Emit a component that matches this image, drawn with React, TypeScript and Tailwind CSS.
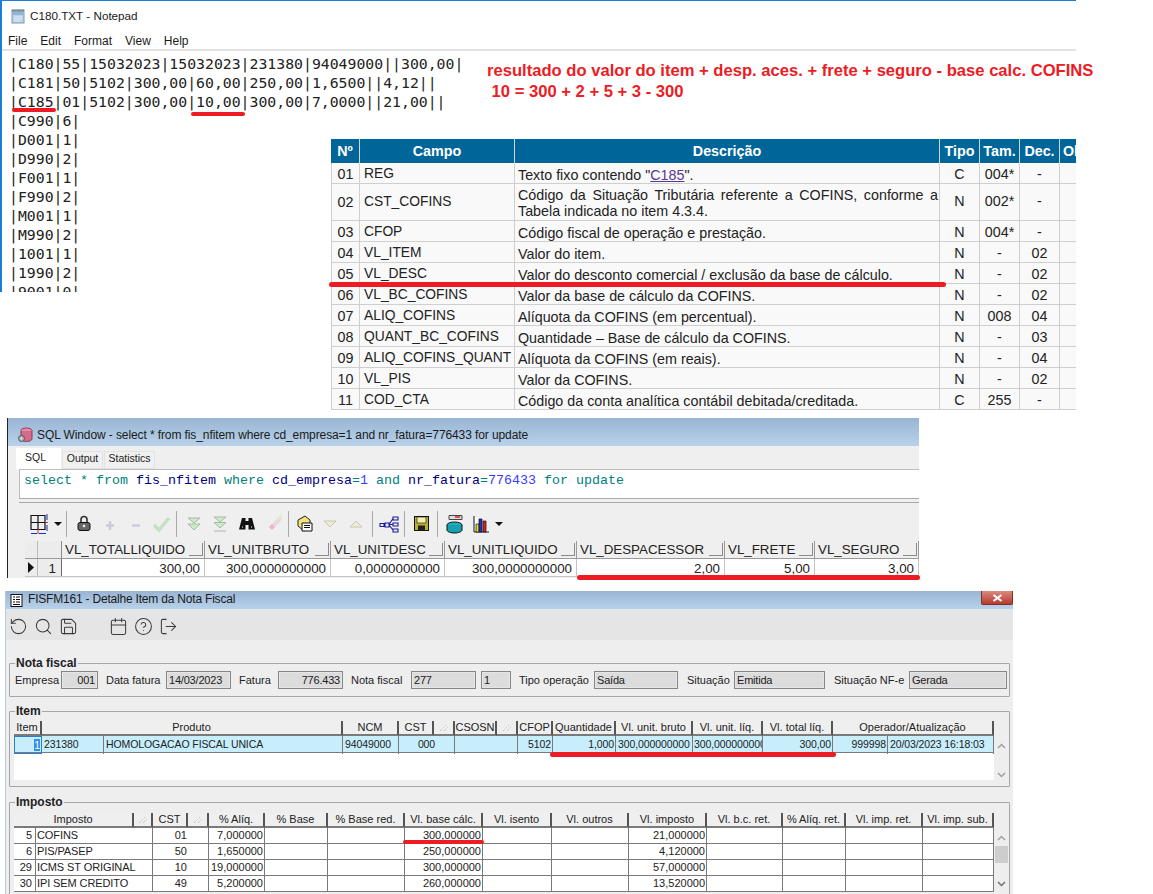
import React from 'react';
import { RotateCcw, Search, Save, Calendar, CircleHelp, LogOut } from 'lucide-react';

const sans = "font-['Liberation_Sans',Arial,sans-serif]";

const notepadLines = [
  '|C180|55|15032023|15032023|231380|94049000||300,00|',
  '|C181|50|5102|300,00|60,00|250,00|1,6500||4,12||',
  '|C185|01|5102|300,00|10,00|300,00|7,0000||21,00||',
  '|C990|6|',
  '|D001|1|',
  '|D990|2|',
  '|F001|1|',
  '|F990|2|',
  '|M001|1|',
  '|M990|2|',
  '|1001|1|',
  '|1990|2|',
  '|9001|0|',
];

const guideRows = [
  ['01', 'REG', null, 'C', '004*', '-'],
  ['02', 'CST_COFINS', 'Código da Situação Tributária referente a COFINS, conforme a Tabela indicada no item 4.3.4.', 'N', '002*', '-'],
  ['03', 'CFOP', 'Código fiscal de operação e prestação.', 'N', '004*', '-'],
  ['04', 'VL_ITEM', 'Valor do item.', 'N', '-', '02'],
  ['05', 'VL_DESC', 'Valor do desconto comercial / exclusão da base de cálculo.', 'N', '-', '02'],
  ['06', 'VL_BC_COFINS', 'Valor da base de cálculo da COFINS.', 'N', '-', '02'],
  ['07', 'ALIQ_COFINS', 'Alíquota da COFINS (em percentual).', 'N', '008', '04'],
  ['08', 'QUANT_BC_COFINS', 'Quantidade – Base de cálculo da COFINS.', 'N', '-', '03'],
  ['09', 'ALIQ_COFINS_QUANT', 'Alíquota da COFINS (em reais).', 'N', '-', '04'],
  ['10', 'VL_PIS', 'Valor da COFINS.', 'N', '-', '02'],
  ['11', 'COD_CTA', 'Código da conta analítica contábil debitada/creditada.', 'C', '255', '-'],
];

const guideCols = 'grid grid-cols-[29px_155px_425px_40px_40px_40px_16px]';

const RedLine: React.FC<{ className: string }> = ({ className }) => (
  <div className={`absolute rounded-full bg-[#ed1c24] ${className}`} />
);

const NotepadIcon = () => (
  <svg width="16" height="16" viewBox="0 0 16 16">
    <rect x="2" y="2" width="12" height="13" fill="#b9d3ea" stroke="#7d97ad" />
    <rect x="3" y="3" width="10" height="4" fill="#8fb6d8" />
    <path d="M3 1.500v2M5 1.500v2M7 1.500v2M9 1.500v2M11 1.500v2M13 1.500v2" stroke="#555" strokeWidth="0.800" />
    <path d="M4 9h8M4 11h8M4 13h6" stroke="#dfeaf4" />
  </svg>
);

const Notepad = () => (
  <div className="absolute left-0 top-0 flex h-[292px] w-[1076px] flex-col overflow-hidden border-l-2 border-t border-[#1a7fd4] bg-white">
    <div className={`flex h-[29px] shrink-0 items-center gap-[4px] pl-[8px] pt-[1px] text-[11.7px] text-[#1a1a1a] ${sans}`}>
      <NotepadIcon />
      <span>C180.TXT - Notepad</span>
    </div>
    <div className={`flex h-[21px] shrink-0 gap-[13px] border-b-2 border-[#e3e3e3] pl-[6px] pt-[2px] text-[12px] text-[#1a1a1a] ${sans}`}>
      {['File', 'Edit', 'Format', 'View', 'Help'].map((m) => (
        <span key={m}>{m}</span>
      ))}
    </div>
    <div className="flex flex-col items-start pl-[7px] pt-[3px] font-['DejaVu_Sans_Mono',monospace] text-[14.8px] leading-[19px] text-[#222]">
      {notepadLines.map((l) => (
        <div key={l} className="whitespace-pre">{l}</div>
      ))}
    </div>
  </div>
);

const Guide = () => (
  <div className={`absolute left-[331px] top-[139px] w-[745px] overflow-hidden text-[14.3px] text-[#222] ${sans}`}>
    <div className={`${guideCols} h-[24px] bg-[#006699] text-center font-bold leading-[24px] text-white`}>
      <div className="border-r border-[#d6d6d6]">Nº</div>
      <div className="border-r border-[#d6d6d6]">Campo</div>
      <div className="border-r border-[#d6d6d6]">Descrição</div>
      <div className="border-r border-[#d6d6d6]">Tipo</div>
      <div className="border-r border-[#d6d6d6]">Tam.</div>
      <div className="border-r border-[#d6d6d6]">Dec.</div>
      <div className="whitespace-nowrap pl-[3px] text-left">Ob</div>
    </div>
    {guideRows.map((r) => (
      <div key={r[0]} className={`${guideCols} items-stretch border-b border-[#cfcfcf] bg-[#f9f9f9] ${r[0] === '02' ? 'h-[37px]' : 'h-[21px]'}`}>
        <div className="flex items-center justify-center border-x border-[#cfcfcf] pt-[1px]">{r[0]}</div>
        <div className="flex items-center whitespace-nowrap border-r border-[#cfcfcf] pl-[4px] pt-[1px] text-[13.8px]">{r[1]}</div>
        <div className="flex items-center border-r border-[#cfcfcf] pl-[3px] pr-[1px] pt-[1px] text-justify leading-[16px]">
          {r[2] ?? (
            <span>
              Texto fixo contendo "<span className="text-[#5a3696] underline">C185</span>".
            </span>
          )}
        </div>
        <div className="flex items-center justify-center border-r border-[#cfcfcf]">{r[3]}</div>
        <div className="flex items-center justify-center border-r border-[#cfcfcf]">{r[4]}</div>
        <div className="flex items-center justify-center border-r border-[#cfcfcf]">{r[5]}</div>
        <div />
      </div>
    ))}
  </div>
);

const DbIcon = () => (
  <svg width="16" height="16" viewBox="0 0 16 16">
    <ellipse cx="9.500" cy="3.500" rx="5.500" ry="2.500" fill="#e88aa6" stroke="#8c3a58" />
    <path d="M4 4v8c0 1.400 2.500 2.500 5.500 2.500s5.500-1.100 5.500-2.500V4" fill="#d46a8c" stroke="#8c3a58" />
    <circle cx="4.500" cy="11.500" r="3" fill="#aab0b6" stroke="#555" />
    <circle cx="4.500" cy="11.500" r="1" fill="#eee" />
  </svg>
);

const Dropdown = () => (
  <svg width="8" height="4" viewBox="0 0 8 4">
    <path d="M0 0h8L4 4z" fill="#111" />
  </svg>
);

const Sep = () => <div className="h-[26px] w-[1px] bg-[#a8a8a8]" />;

const Tool: React.FC<{ w: number; children: React.ReactNode }> = ({ w, children }) => (
  <svg width={w} height="24" viewBox={`0 0 ${w} 24`} className="block">
    {children}
  </svg>
);

const SqlToolbar = () => (
  <div className="flex h-[38px] items-center pl-[22px] pt-[4px]">
    <Tool w={18}>
      <path d="M1 3.500h14v14H1zM1 10.500h14M8 3.500v14" fill="none" stroke="#111" strokeWidth="1.200" />
      <path d="M8 17v5M15 10.500h3" stroke="#d22" />
      <path d="M17 2v6M17 13v6M1 21.500h6M9 21.500h7" stroke="#1030c0" />
    </Tool>
    <div className="ml-[6px] mr-[4px] flex items-center"><Dropdown /></div>
    <Sep />
    <div className="ml-[10px]">
      <Tool w={14}>
        <path d="M4 11V7.500a3 3 0 016 0V11" fill="none" stroke="#333" strokeWidth="1.600" />
        <rect x="1" y="10.500" width="12" height="8" rx="2" fill="#666" stroke="#111" />
        <circle cx="7" cy="14" r="1.300" fill="#eee" />
      </Tool>
    </div>
    <div className="ml-[14px]">
      <Tool w={10}>
        <path d="M5 9v9M1 13.500h8" stroke="#ccccdf" strokeWidth="2.500" />
      </Tool>
    </div>
    <div className="ml-[16px]">
      <Tool w={10}>
        <path d="M1 13.500h8" stroke="#ccccdf" strokeWidth="2.500" />
      </Tool>
    </div>
    <div className="ml-[10px]">
      <Tool w={22}>
        <path d="M3 13l5 5L18 6" fill="none" stroke="#c6dfc6" strokeWidth="3.500" />
      </Tool>
    </div>
    <div className="ml-[3px]"><Sep /></div>
    <div className="ml-[10px]">
      <Tool w={14}>
        <path d="M1 6h12L7 11zM1 12h12L7 18z" fill="#c8eec8" stroke="#a8b8a8" />
      </Tool>
    </div>
    <div className="ml-[12px]">
      <Tool w={14}>
        <path d="M1 5h12L7 10zM1 10.500h12L7 16z" fill="#c8eec8" stroke="#a8b8a8" />
        <path d="M1 19h12" stroke="#a8b8a8" />
      </Tool>
    </div>
    <div className="ml-[12px]">
      <Tool w={16}>
        <path d="M3 6h3.500v3h3V6H13l3 11.500h-6.500V13h-3v4.500H0z" fill="#111" />
        <path d="M3 15h1M12 15h1" stroke="#fff" />
      </Tool>
    </div>
    <div className="ml-[13px]">
      <Tool w={15}>
        <path d="M1 15L10 6l3 3-9 9z" fill="#e7d8dc" />
        <path d="M1 15l3 3 3-3-3-3z" fill="#efb4c6" />
        <path d="M10 6l3-3 1 3-1 3z" fill="#dfe9c0" />
      </Tool>
    </div>
    <div className="ml-[5px]"><Sep /></div>
    <div className="ml-[7px]">
      <Tool w={17}>
        <path d="M2 8l7-4 5 4v8l-6 3-6-5z" fill="#f4e27c" stroke="#222" />
        <path d="M6 11h10v8H6z" fill="#fff" stroke="#111" />
        <path d="M8 13.500h6M8 15.500h6" stroke="#111" />
      </Tool>
    </div>
    <div className="ml-[10px]">
      <Tool w={14}>
        <path d="M1 9h12L7 15z" fill="#ececd0" stroke="#c8c8b8" />
      </Tool>
    </div>
    <div className="ml-[12px]">
      <Tool w={14}>
        <path d="M1 15h12L7 9z" fill="#ececd0" stroke="#c8c8b8" />
      </Tool>
    </div>
    <div className="ml-[9px]"><Sep /></div>
    <div className="ml-[6px]">
      <Tool w={20}>
        <path d="M1 11.500h4v3H1zM6 11h4v4H6zM14 5h5v3h-5zM14 11h5v3h-5zM14 17h5v3h-5zM10 12.500l4-6M10 12.500h4M10 13l4 5" fill="none" stroke="#1a1a9a" strokeWidth="1.100" />
      </Tool>
    </div>
    <div className="ml-[5px]"><Sep /></div>
    <div className="ml-[9px]">
      <Tool w={15}>
        <rect x="0.500" y="4.500" width="14" height="14" fill="#b8b030" stroke="#111" />
        <rect x="3" y="5" width="9" height="6" fill="#f4f0a8" stroke="#111" strokeWidth="0.600" />
        <rect x="4" y="13.500" width="7" height="5" fill="#222" />
      </Tool>
    </div>
    <div className="ml-[8px]"><Sep /></div>
    <div className="ml-[8px]">
      <Tool w={17}>
        <path d="M3 3.500h13v4H3z" fill="#ddd" stroke="#444" />
        <path d="M9 5h5" stroke="#d22" strokeWidth="1.500" />
        <ellipse cx="8.500" cy="13" rx="7.500" ry="3" fill="#16b4c4" stroke="#111" />
        <path d="M1 13v5c0 1.600 3.400 3 7.500 3s7.500-1.400 7.500-3v-5" fill="#16a0b0" stroke="#111" />
      </Tool>
    </div>
    <div className="ml-[10px]">
      <Tool w={16}>
        <path d="M1 4v16h15" fill="#fff" stroke="#111" />
        <path d="M3 12h3v8H3z" fill="#e8e020" stroke="#111" strokeWidth="0.700" />
        <path d="M6 7h3v13H6z" fill="#1a30c8" stroke="#111" strokeWidth="0.700" />
        <path d="M10 9h3v11h-3z" fill="#d82020" stroke="#111" strokeWidth="0.700" />
      </Tool>
    </div>
    <div className="ml-[6px] flex items-center"><Dropdown /></div>
  </div>
);

const sqlCols = [
  { name: 'VL_TOTALLIQUIDO', value: '300,00', w: 'w-[143px]' },
  { name: 'VL_UNITBRUTO', value: '300,0000000000', w: 'w-[126px]' },
  { name: 'VL_UNITDESC', value: '0,0000000000', w: 'w-[114px]' },
  { name: 'VL_UNITLIQUIDO', value: '300,0000000000', w: 'w-[132px]' },
  { name: 'VL_DESPACESSOR', value: '2,00', w: 'w-[148px]' },
  { name: 'VL_FRETE', value: '5,00', w: 'w-[90px]' },
  { name: 'VL_SEGURO', value: '3,00', w: 'w-[104px]' },
];

const SqlWindow = () => (
  <div className={`absolute left-[7px] top-[418px] flex h-[160px] w-[912px] flex-col overflow-hidden border-l border-[#222] bg-[#efefef] ${sans}`}>
    <div className="flex h-[28px] shrink-0 items-center gap-[4px] bg-gradient-to-b from-[#9ab5d3] to-[#b8d2eb] pl-[9px] pt-[5px] text-[12px] tracking-[-0.1px] text-[#1a1a1a]">
      <DbIcon />
      <span>SQL Window - select * from fis_nfitem where cd_empresa=1 and nr_fatura=776433 for update</span>
    </div>
    <div className="flex h-[23px] shrink-0 items-end pl-[8px] text-[10.5px] text-[#222]">
      <div className="flex h-[21px] w-[45px] items-center bg-white pb-[2px] pl-[9px]">SQL</div>
      <div className="ml-[1px] flex h-[18px] w-[41px] items-center justify-center border border-[#e2e2e2] bg-[#f0f0f0] pb-[2px]">Output</div>
      <div className="ml-[1px] flex h-[18px] w-[51px] items-center justify-center border border-[#e2e2e2] bg-[#f0f0f0] pb-[2px]">Statistics</div>
    </div>
    <div className="ml-[11px] flex h-[29px] shrink-0 items-start whitespace-pre border-l border-t border-[#bdbdbd] bg-white pl-[4px] pt-[4px] font-['Liberation_Mono',monospace] text-[13.33px] leading-none text-[#008080]">
      <span>select * from </span>
      <span className="text-[#000080]">fis_nfitem </span>
      <span>where </span>
      <span className="text-[#000080]">cd_empresa</span>
      <span>=</span>
      <span className="text-[#3a3aff]">1 </span>
      <span>and </span>
      <span className="text-[#000080]">nr_fatura</span>
      <span>=</span>
      <span className="text-[#3a3aff]">776433 </span>
      <span>for update</span>
    </div>
    <div className="ml-[11px] h-[5px] shrink-0 border-y border-y-[#a9a9a9] bg-[#efefef]" />
    <SqlToolbar />
    <div className="ml-[17px] flex h-[18px] shrink-0 border-b border-[#9a9a9a] text-[13.33px] text-[#222]">
      <div className="w-[13px] border-r border-[#bcbcbc] bg-[#ececec]" />
      <div className="w-[24px] border-r border-[#8c8c8c] bg-[#ececec]" />
      {sqlCols.map((c) => (
        <div key={c.name} className={`${c.w} flex items-center justify-between border-r border-[#9a9a9a] pl-[3px]`}>
          <span>{c.name}</span>
          <span className="mr-px h-[13px] w-[14px] border-b border-r border-[#8a8a8a]" />
        </div>
      ))}
    </div>
    <div className="ml-[17px] flex h-[18px] shrink-0 border-b border-[#c4c4c4] bg-white text-[13.33px] text-[#222]">
      <div className="flex w-[13px] items-center justify-center border-r border-[#bcbcbc] bg-[#ececec]">
        <svg width="6" height="11" viewBox="0 0 6 11"><path d="M0 0l6 5.500L0 11z" fill="#111" /></svg>
      </div>
      <div className="w-[24px] border-r border-[#6a6a6a] bg-[#ececec] pr-[5px] text-right">1</div>
      {sqlCols.map((c) => (
        <div key={c.name} className={`${c.w} border-r border-[#c4c4c4] pr-[4px] text-right`}>{c.value}</div>
      ))}
    </div>
  </div>
);

const SortMark = () => (
  <svg width="10" height="8" viewBox="0 0 10 8">
    <path d="M1 7l4-4M5 7l4-4M6 2l1-1" stroke="#b4b4b4" strokeWidth="1" strokeDasharray="1 1" />
  </svg>
);

const Fsym: React.FC<{ children: React.ReactNode }> = ({ children }) => (
  <div className="flex w-[25px] justify-center text-[#3c3c3c]">{children}</div>
);

const Box: React.FC<{ w: string; right?: boolean; children: string }> = ({ w, right, children }) => (
  <div className={`${w} ${right ? 'text-right' : 'text-left'} h-[18px] shrink-0 border border-[#868686] bg-[#dcdcdc] px-[2px] text-[11px] leading-[16px] tracking-[-0.2px] text-[#222] outline outline-[1px] -outline-offset-2 outline-[#e6e6e6]`}>
    {children}
  </div>
);

const Lbl: React.FC<{ w: string; children: string }> = ({ w, children }) => (
  <div className={`${w} shrink-0 whitespace-nowrap text-[11px] leading-[16px] text-[#222]`}>{children}</div>
);

const Group: React.FC<{ title: string; className: string; children: React.ReactNode }> = ({ title, className, children }) => (
  <fieldset className={`mx-[3px] shrink-0 rounded-[1px] border border-[#a6a6a6] ${className}`}>
    <legend className="ml-[5px] px-[1px] text-[12px] font-bold leading-[14px] text-[#222]">{title}</legend>
    {children}
  </fieldset>
);

const itemHead = 'grid grid-cols-[28px_301px_56px_35px_21px_42px_21px_35px_63px_77px_70px_70px_161px]';
const itemRow = 'grid grid-cols-[28px_62px_239px_56px_56px_63px_35px_63px_77px_70px_70px_55px_106px]';

const itemHeaders = ['Item', 'Produto', 'NCM', 'CST', '', 'CSOSN', '', 'CFOP', 'Quantidade', 'Vl. unit. bruto', 'Vl. unit. líq.', 'Vl. total líq.', 'Operador/Atualização'];

const impHead = 'grid grid-cols-[120px_19px_35px_21px_56px_63px_77px_78px_69px_77px_78px_76px_63px_77px_71px]';
const impRow = 'grid grid-cols-[21px_118px_56px_56px_63px_77px_78px_69px_77px_78px_76px_63px_77px_71px]';

const impHeaders = ['Imposto', '', 'CST', '', '% Alíq.', '% Base', '% Base red.', 'Vl. base cálc.', 'Vl. isento', 'Vl. outros', 'Vl. imposto', 'Vl. b.c. ret.', '% Alíq. ret.', 'Vl. imp. ret.', 'Vl. imp. sub.'];

const impData = [
  ['5', 'COFINS', '01', '7,000000', '300,000000', '21,000000'],
  ['6', 'PIS/PASEP', '50', '1,650000', '250,000000', '4,120000'],
  ['29', 'ICMS ST ORIGINAL', '10', '19,000000', '300,000000', '57,000000'],
  ['30', 'IPI SEM CREDITO', '49', '5,200000', '260,000000', '13,520000'],
];

const Head: React.FC<{ label: string }> = ({ label }) => (
  <div className="flex h-[15px] items-center justify-center whitespace-nowrap border-b-2 border-r-2 border-b-[#7a7a7a] border-r-[#555] bg-[#efefef] text-[11px] leading-none text-[#222]">
    {label || <SortMark />}
  </div>
);

const ArrowUp = () => (
  <svg width="9" height="6" viewBox="0 0 9 6"><path d="M1 5l3.500-3.500L8 5" fill="none" stroke="#a0a0a0" strokeWidth="1.500" /></svg>
);

const ArrowDown: React.FC<{ dark?: boolean }> = ({ dark }) => (
  <svg width="9" height="6" viewBox="0 0 9 6"><path d="M1 1l3.500 3.500L8 1" fill="none" stroke={dark ? '#707070' : '#a0a0a0'} strokeWidth="1.500" /></svg>
);

const FisWindow = () => (
  <div className={`absolute left-[5px] top-[591px] flex h-[303px] w-[1008px] flex-col overflow-hidden border-l border-[#b4cbe2] bg-[#eeeeee] ${sans}`}>
    <div className="flex h-[18px] shrink-0 items-center gap-[5px] bg-gradient-to-b from-[#9ab5d3] to-[#b8d2eb] pl-[4px] text-[12px] tracking-[-0.2px] text-[#1a1a1a]">
      <svg width="13" height="13" viewBox="0 0 13 13">
        <rect x="1" y="0.500" width="11" height="12" fill="#fff" stroke="#111" />
        <path d="M3 3h2M6 3h4M3 5.500h2M6 5.500h4M3 8h2M6 8h4M3 10.500h7" stroke="#111" />
      </svg>
      <span className="pb-[2px]">FISFM161 - Detalhe Item da Nota Fiscal</span>
      <div className="mb-[4px] ml-auto flex h-[14px] w-[32px] items-center justify-center rounded-b-[2px] border border-t-0 border-[#7c2f2b] bg-gradient-to-b from-[#d98a80] to-[#b8352c]">
        <svg width="11" height="8" viewBox="0 0 11 8"><path d="M1.500 1l8 6M9.500 1l-8 6" stroke="#fff" strokeWidth="2" /></svg>
      </div>
    </div>
    <div className="flex h-[31px] shrink-0 items-center bg-[#e5e5e5] pt-[3px]">
      <Fsym><RotateCcw size={19} strokeWidth={1.3} /></Fsym>
      <Fsym><Search size={19} strokeWidth={1.3} /></Fsym>
      <Fsym><Save size={19} strokeWidth={1.3} /></Fsym>
      <div className="w-[25px]" />
      <Fsym><Calendar size={19} strokeWidth={1.3} /></Fsym>
      <Fsym><CircleHelp size={19} strokeWidth={1.3} /></Fsym>
      <Fsym><LogOut size={19} strokeWidth={1.3} /></Fsym>
    </div>

    <div className="h-[16px] shrink-0" />
    <Group title="Nota fiscal" className="h-[41px]">
      <div className="flex items-center pl-[5px] pt-[1px]">
        <Lbl w="w-[46px]">Empresa</Lbl>
        <Box w="w-[37px]" right>001</Box>
        <Lbl w="w-[68px] pl-[8px]">Data fatura</Lbl>
        <Box w="w-[65px]">14/03/2023</Box>
        <Lbl w="w-[47px] pl-[8px]">Fatura</Lbl>
        <Box w="w-[65px]" right>776.433</Box>
        <Lbl w="w-[68px] pl-[8px]">Nota fiscal</Lbl>
        <Box w="w-[65px]">277</Box>
        <div className="w-[5px]" />
        <Box w="w-[30px]">1</Box>
        <Lbl w="w-[83px] pl-[8px]">Tipo operação</Lbl>
        <Box w="w-[84px]">Saída</Box>
        <Lbl w="w-[56px] pl-[9px]">Situação</Lbl>
        <Box w="w-[91px]">Emitida</Box>
        <Lbl w="w-[84px] pl-[9px]">Situação NF-e</Lbl>
        <Box w="w-[98px]">Gerada</Box>
      </div>
    </Group>

    <div className="h-[7px] shrink-0" />
    <Group title="Item" className="h-[83px]">
      <div className="flex pl-[4px] pt-[3px]">
        <div className="w-[980px] bg-white">
          <div className={itemHead}>
            {itemHeaders.map((h, i) => (
              <Head key={i} label={h} />
            ))}
          </div>
          <div className={`${itemRow} h-[17px] border-b border-[#7a7a7a] bg-[#c8eefc] text-[10.5px] leading-[16px] tracking-[-0.1px] text-[#222]`}>
            <div className="border border-[#2a7fd4] pr-[1px] text-right"><span className="bg-[#3390e8] text-white">1</span></div>
            <div className="border-r border-[#7a7a7a] pl-[2px]">231380</div>
            <div className="border-r border-[#7a7a7a] pl-[2px]">HOMOLOGACAO FISCAL UNICA</div>
            <div className="border-r border-[#7a7a7a] pl-[2px]">94049000</div>
            <div className="border-r border-[#7a7a7a] text-center">000</div>
            <div className="border-r border-[#7a7a7a]" />
            <div className="border-r border-[#7a7a7a] pr-[1px] text-right">5102</div>
            <div className="border-r border-[#7a7a7a] pr-[1px] text-right">1,000</div>
            <div className="overflow-hidden whitespace-nowrap border-r border-[#7a7a7a] pl-[2px]">300,000000000</div>
            <div className="overflow-hidden whitespace-nowrap border-r border-[#7a7a7a] pl-[1px]">300,000000000</div>
            <div className="border-r border-[#7a7a7a] pr-[1px] text-right">300,00</div>
            <div className="border-r border-[#7a7a7a] pr-[1px] text-right">999998</div>
            <div className="whitespace-nowrap border-r border-[#7a7a7a] pl-[2px]">20/03/2023 16:18:03</div>
          </div>
          <div className="h-[27px]" />
        </div>
        <div className="ml-[1px] flex w-[13px] flex-col items-center pt-[22px]">
          <ArrowUp />
          <div className="h-[23px]" />
          <ArrowDown />
        </div>
      </div>
    </Group>

    <div className="h-[8px] shrink-0" />
    <Group title="Imposto" className="h-[120px]">
      <div className="flex pl-[4px] pt-[4px]">
        <div className="w-[980px] bg-white">
          <div className={impHead}>
            {impHeaders.map((h, i) => (
              <Head key={i} label={h} />
            ))}
          </div>
          {impData.map((r) => (
            <div key={r[0]} className={`${impRow} h-[16px] border-b border-[#7a7a7a] text-[11px] leading-[15px] text-[#222]`}>
              <div className="pr-[3px] text-right">{r[0]}</div>
              <div className="whitespace-nowrap border-x border-[#7a7a7a] pl-[1px] tracking-[-0.1px]">{r[1]}</div>
              <div className="border-r border-[#7a7a7a] pr-[21px] text-right">{r[2]}</div>
              <div className="border-r border-[#7a7a7a] pr-[1px] text-right">{r[3]}</div>
              <div className="border-r border-[#7a7a7a]" />
              <div className="border-r border-[#7a7a7a]" />
              <div className="border-r border-[#7a7a7a] pr-[1px] text-right">{r[4]}</div>
              <div className="border-r border-[#7a7a7a]" />
              <div className="border-r border-[#7a7a7a]" />
              <div className="border-r border-[#7a7a7a] pr-[1px] text-right">{r[5]}</div>
              <div className="border-r border-[#7a7a7a]" />
              <div className="border-r border-[#7a7a7a]" />
              <div className="border-r border-[#7a7a7a]" />
              <div className="border-r border-[#7a7a7a]" />
            </div>
          ))}
        </div>
        <div className="ml-[1px] flex w-[13px] flex-col items-center pt-[22px]">
          <ArrowUp />
          <div className="mt-[5px] h-[17px] w-[13px] bg-[#cdcdcd]" />
          <div className="h-[18px]" />
          <ArrowDown dark />
        </div>
      </div>
    </Group>
  </div>
);

export default function App() {
  return (
    <div className="relative h-[894px] w-[1153px] overflow-hidden bg-white">
      <Notepad />
      <div className={`absolute left-[487px] top-[60px] whitespace-pre text-[16.6px] font-bold leading-[21px] text-[#ed1c24] ${sans}`}>
        {'resultado do valor do item + desp. aces. + frete + seguro - base calc. COFINS\n 10 = 300 + 2 + 5 + 3 - 300'}
      </div>
      <Guide />
      <SqlWindow />
      <FisWindow />

      <RedLine className="left-[12px] top-[108px] h-[4px] w-[44px]" />
      <RedLine className="left-[191px] top-[112px] h-[4px] w-[54px]" />
      <RedLine className="left-[329px] top-[282px] h-[5px] w-[617px]" />
      <RedLine className="left-[577px] top-[575px] h-[5px] w-[343px]" />
      <RedLine className="left-[550px] top-[752px] h-[5px] w-[286px]" />
      <RedLine className="left-[403px] top-[840px] h-[4px] w-[81px]" />
    </div>
  );
}
